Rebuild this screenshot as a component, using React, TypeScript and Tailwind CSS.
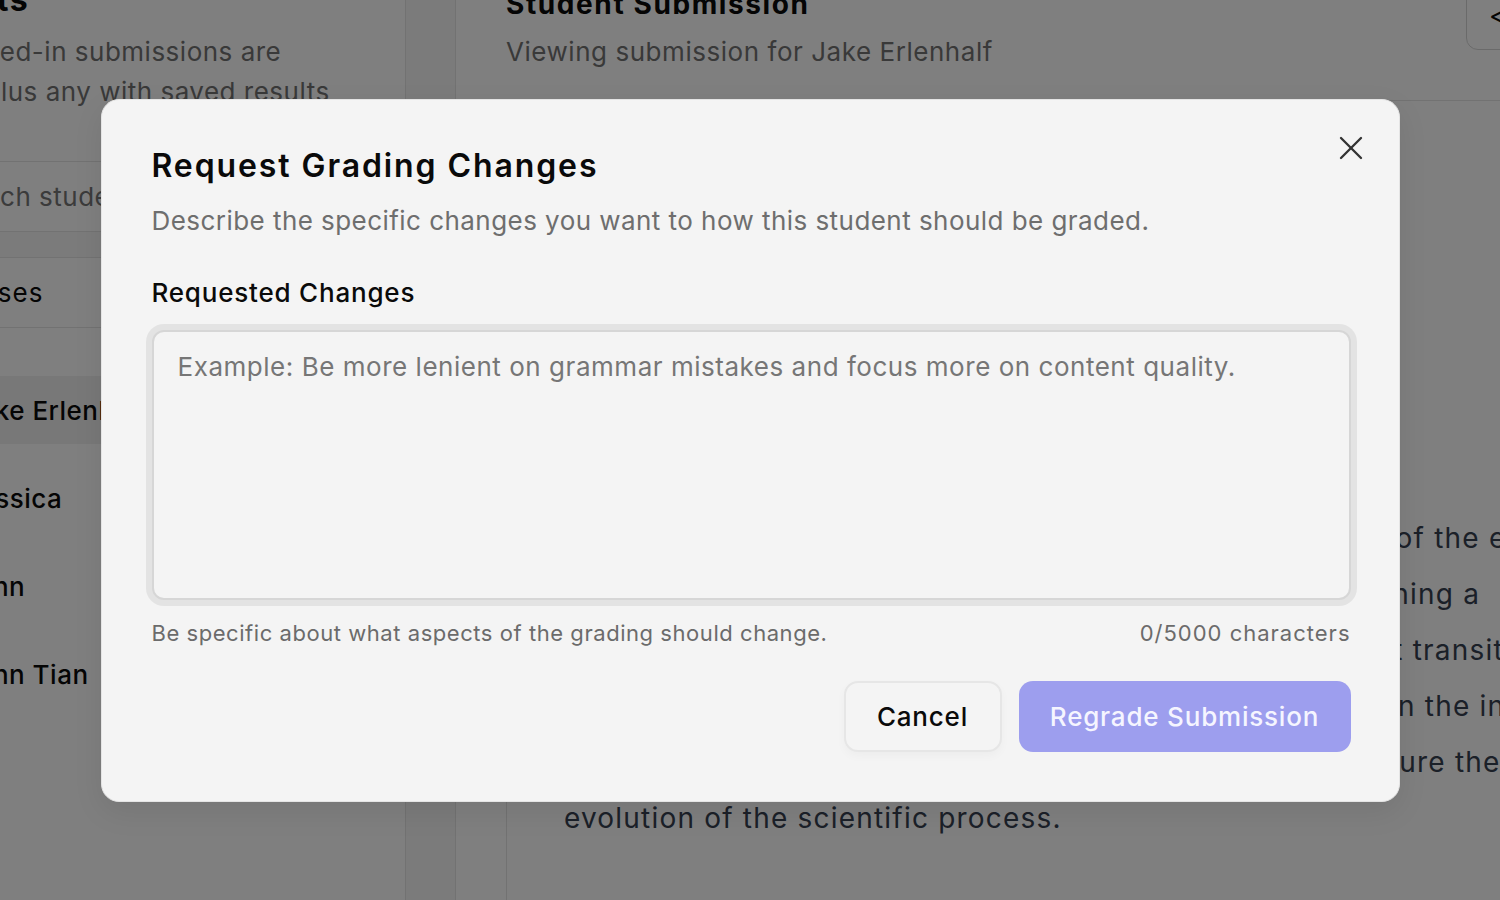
import React from "react";
import { X } from "lucide-react";

const students = [
  { name: "Jake Erlenhalf", selected: true },
  { name: "Jessica", selected: false },
  { name: "Lynn", selected: false },
  { name: "Lynn Tian", selected: false },
];

const essayLines = [
  "The Scientific Revolution marks one of the defining times of the early modern era,",
  "era, when philosophers and natural writers began questioning a",
  "long-held assumption over the natural world. An important transition",
  "from ancient authority to actual observation has resulted in the increasing",
  "increased use of evidence and laws that would now structure the",
  "evolution of the scientific process.",
];

export default function App() {
  return (
    <div
      className="relative w-[1500px] h-[900px] overflow-hidden bg-white flex"
      style={{ fontFamily: "Inter, 'Noto Sans', sans-serif" }}
    >
      {/* Sidebar */}
      <aside className="w-[406px] shrink-0 h-full border-r border-[#e5e5e5] overflow-hidden">
        <div className="-ml-[58px] w-[464px]">
          <div className="border-b border-[#e5e5e5] pb-[49px]">
            <div className="-mt-[20px] -ml-[66px] text-[32px] leading-[40px] font-bold tracking-[1.5px] text-[#0a0a0a] whitespace-nowrap">
              Students
            </div>
            <div className="mt-[12px] text-[26px] leading-[40px] tracking-[0.5px] text-[#737373] whitespace-nowrap">
              <div>Turned-in submissions are</div>
              <div className="ml-[6px]">all plus any with saved results</div>
            </div>
          </div>
          <div className="h-[70px] flex items-center border-b border-[#e5e5e5] text-[26px] tracking-[0.5px] text-[#777777] whitespace-nowrap">
            Search students...
          </div>
          <div className="h-[26px] bg-[#f6f6f6] border-b border-[#e5e5e5]" />
          <div className="h-[70px] flex items-center border-b border-[#e5e5e5] text-[26px] tracking-[1px] text-[#0a0a0a] whitespace-nowrap">
            <span className="-ml-[8px]">Courses</span>
          </div>
          <div className="pt-[48px] flex flex-col gap-[20px]">
            {students.map((s) => (
              <div
                key={s.name}
                className={
                  "h-[68px] flex items-center pl-[22px] text-[26px] tracking-[0.5px] text-[#0a0a0a] font-medium whitespace-nowrap " +
                  (s.selected ? "bg-[#f0f0f0]" : "")
                }
              >
                {s.name}
              </div>
            ))}
          </div>
        </div>
      </aside>

      {/* Strip */}
      <div className="w-[50px] shrink-0 h-full bg-[#f7f7f7] border-r border-[#e5e5e5]" />

      {/* Main */}
      <main className="flex-1 h-full flex flex-col min-w-0">
        <header className="h-[101px] shrink-0 border-b border-[#e5e5e5] pl-[50px] flex">
          <div className="-mt-[14px] flex flex-col">
            <div className="text-[28px] leading-[36px] font-bold tracking-[1.6px] text-[#0a0a0a] whitespace-nowrap">
              Student Submission
            </div>
            <div className="mt-[12px] text-[26px] leading-[36px] tracking-[0.54px] text-[#737373] whitespace-nowrap">
              Viewing submission for Jake Erlenhalf
            </div>
          </div>
          <div className="ml-auto -mr-[80px] shrink-0">
            <div className="-mt-[18px] w-[114px] h-[68px] rounded-[12px] border border-[#d4d4d4] bg-white flex items-center pl-[22px] text-[26px] text-[#0a0a0a] whitespace-nowrap">
              &lt; Prev
            </div>
          </div>
        </header>
        <div className="pl-[50px] pt-[40px] flex-1">
          <div className="w-[1100px] h-full border-l border-[#e5e5e5] pl-[57px] pt-[40px]">
            <div className="text-[28px] leading-[40px] font-semibold text-[#111827]">Essay Response</div>
            <div className="mt-[8px] text-[22px] text-[#6b7280]">Submitted on March 3</div>
            <div className="mt-[248px] text-[28px] leading-[56px] tracking-[1.2px] text-[#374151]">
              {essayLines.map((l, i) => (
                <div key={i} className="whitespace-nowrap">
                  {l}
                </div>
              ))}
            </div>
          </div>
        </div>
      </main>

      {/* Overlay */}
      <div className="absolute inset-0 bg-black/50 flex items-center justify-center">
        <div className="relative w-[1299px] rounded-[18px] border border-[#e4e4e4] bg-[#f4f4f4] shadow-[0_10px_30px_rgba(0,0,0,0.08)] pt-[46px] pl-[50px] pr-[48px] pb-[49px]">
          <button className="absolute top-[28px] right-[28px] w-[40px] h-[40px] flex items-center justify-center text-[#333333]">
            <X size={40} strokeWidth={1.4} />
          </button>
          <h2 className="text-[32px] leading-[40px] font-semibold tracking-[1.9px] text-[#0a0a0a]">
            Request Grading Changes
          </h2>
          <p className="mt-[17px] text-[26px] leading-[36px] tracking-[0.45px] text-[#6e6e6e]">
            Describe the specific changes you want to how this student should be graded.
          </p>
          <div className="mt-[36px] text-[26px] leading-[36px] font-medium tracking-[0.8px] text-[#0a0a0a]">
            Requested Changes
          </div>
          <textarea
            className="mt-[19px] block w-full h-[270px] resize-none rounded-[12px] border-2 border-[#d6d6d6] bg-[#f4f4f4] shadow-[0_0_0_6px_#e3e3e3] px-[24px] py-[17px] text-[26px] leading-[36px] tracking-[0.53px] text-[#0a0a0a] placeholder:text-[#767676] outline-none"
            placeholder="Example: Be more lenient on grammar mistakes and focus more on content quality."
          />
          <div className="mt-[18px] flex justify-between text-[22px] leading-[30px] text-[#6b6b6b]">
            <span className="tracking-[0.55px]">Be specific about what aspects of the grading should change.</span>
            <span className="tracking-[1px]">0/5000 characters</span>
          </div>
          <div className="mt-[33px] flex justify-end gap-[17px]">
            <button className="h-[71px] w-[158px] rounded-[14px] border-2 border-[#e6e6e6] bg-[#f4f4f4] shadow-[0_4px_10px_rgba(0,0,0,0.03)] text-[26px] font-medium tracking-[0.8px] text-[#0a0a0a]">
              Cancel
            </button>
            <button className="h-[71px] w-[332px] rounded-[14px] bg-[#9d9eee] text-[26px] font-medium tracking-[0.8px] text-[#f5f5ff]">
              Regrade Submission
            </button>
          </div>
        </div>
      </div>
    </div>
  );
}
